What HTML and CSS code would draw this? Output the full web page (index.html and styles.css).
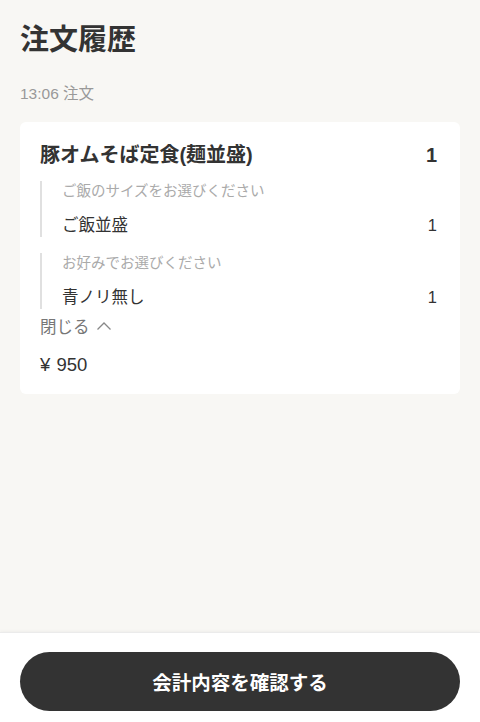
FILE: index.html
```html
<!DOCTYPE html>
<html lang="ja">
<head>
<meta charset="utf-8">
<link rel="stylesheet" href="styles.css">
</head>
<body>
<div class="page">
  <main class="content">
    <h1 class="title">注文履歴</h1>
    <div class="time">13:06 注文</div>
    <section class="card">
      <div class="item-row">
        <span class="item-name">豚オムそば定食(麺並盛)</span>
        <span class="item-qty">1</span>
      </div>
      <div class="option">
        <div class="option-label">ご飯のサイズをお選びください</div>
        <div class="option-row"><span>ご飯並盛</span><span>1</span></div>
      </div>
      <div class="option">
        <div class="option-label">お好みでお選びください</div>
        <div class="option-row"><span>青ノリ無し</span><span>1</span></div>
      </div>
      <div class="toggle">閉じる
        <svg class="chev" width="16" height="10" viewBox="0 0 16 10"><path d="M1.5 8.5 L8 2 L14.5 8.5" fill="none" stroke="#888" stroke-width="1.3"/></svg>
      </div>
      <div class="price">¥ 950</div>
    </section>
  </main>
  <footer class="footer">
    <button class="confirm">会計内容を確認する</button>
  </footer>
</div>
</body>
</html>
```
FILE: styles.css
```css
* { box-sizing: border-box; }
html, body { margin: 0; padding: 0; }
body {
  background: #f8f7f4;
  font-family: "Liberation Sans", "Noto Sans CJK JP", sans-serif;
  color: #333;
  width: 480px;
  height: 722px;
  overflow: hidden;
}
.page { display: flex; flex-direction: column; height: 722px; }
.content { flex: 1; padding: 20px 20px 0; }
.title {
  margin: 0;
  font-size: 29px;
  font-weight: 700;
  line-height: 40px;
  color: #333;
}
.time {
  margin-top: 24px;
  font-size: 15.5px;
  line-height: 20px;
  color: #999;
}
.card {
  margin-top: 18px;
  background: #fff;
  border-radius: 6px;
  padding: 19px 20px 17px;
}
.item-row {
  display: flex;
  justify-content: space-between;
  align-items: center;
  font-size: 20px;
  font-weight: 700;
  line-height: 28px;
  color: #333;
}
.item-qty { padding-right: 3px; }
.option {
  border-left: 2px solid #e0e0e0;
  padding-left: 20px;
  margin-top: 12px;
}
.option + .option { margin-top: 16px; }
.option-label {
  font-size: 14.5px;
  line-height: 20px;
  color: #aaa;
}
.option-row {
  display: flex;
  justify-content: space-between;
  font-size: 16.5px;
  line-height: 24px;
  margin-top: 12px;
  color: #333;
}
.option-row span:last-child { padding-right: 3px; }
.toggle {
  display: flex;
  align-items: center;
  gap: 6px;
  font-size: 16.5px;
  line-height: 24px;
  color: #777;
  margin-top: 6px;
}
.chev { margin-top: -2px; }
.price {
  font-size: 18.5px;
  line-height: 24px;
  margin-top: 14px;
  color: #333;
  word-spacing: 1px;
}
.footer {
  background: #fff;
  height: 90px;
  border-top: 1px solid #ebebeb;
  box-shadow: 0 -1px 3px rgba(0,0,0,0.04);
  padding: 19px 20px 0;
}
.confirm {
  width: 100%;
  height: 59px;
  border: none;
  border-radius: 30px;
  background: #333;
  color: #fff;
  font-family: "Noto Sans CJK JP", sans-serif;
  font-size: 19.5px;
  font-weight: 700;
}
```
